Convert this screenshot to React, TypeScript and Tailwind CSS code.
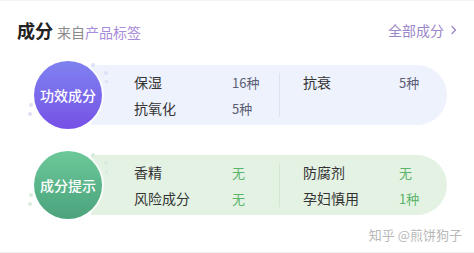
import React from "react";

type Item = { name: string; value: string };

function Section({
  label,
  circleClass,
  pillClass,
  valueClass,
  dotClass,
  dividerClass,
  left,
  right,
}: {
  label: string;
  circleClass: string;
  pillClass: string;
  valueClass: string;
  dotClass: string;
  dividerClass: string;
  left: Item[];
  right: Item[];
}) {
  return (
    <div className="flex items-center h-[68px] pl-[34px] relative">
      <span className={`absolute left-[91px] top-[2px] w-[4px] h-[4px] rounded-full ${dotClass}`} />
      <span className={`absolute left-[104px] top-[10px] w-[4px] h-[4px] rounded-full ${dotClass}`} />
      <span className={`absolute left-[105px] top-[19px] w-[3px] h-[3px] rounded-full ${dotClass}`} />
      <span className={`absolute left-[29px] top-[42px] w-[4px] h-[4px] rounded-full ${dotClass}`} />
      <span className={`absolute left-[28px] top-[51px] w-[4px] h-[4px] rounded-full ${dotClass}`} />
      <div
        className={`relative z-10 w-[68px] h-[68px] shrink-0 rounded-full flex items-center justify-center text-white text-[14px] font-medium ring-2 ring-white/70 ${circleClass}`}
      >
        {label}
      </div>
      <div
        className={`-ml-[11px] h-[60px] w-[356px] rounded-r-[30px] flex items-stretch pl-[43px] ${pillClass}`}
      >
        <div className="flex flex-col justify-center gap-[6px]">
          {left.map((it) => (
            <div key={it.name} className="flex h-[20px] items-center">
              <span className="w-[98px] text-[14px] text-[#333]">{it.name}</span>
              <span className={`w-[47px] text-[13px] ${valueClass}`}>{it.value}</span>
            </div>
          ))}
        </div>
        <div className={`w-px my-[8px] ${dividerClass}`} />
        <div className="flex flex-col justify-center gap-[6px] pl-[23px]">
          {right.map((it) => (
            <div key={it.name} className="flex h-[20px] items-center">
              <span className="w-[96px] text-[14px] text-[#333]">{it.name}</span>
              <span className={`text-[13px] ${valueClass}`}>{it.value}</span>
            </div>
          ))}
          {right.length < 2 && <div className="h-[20px]" />}
        </div>
      </div>
    </div>
  );
}

export default function App() {
  return (
    <div
      className="w-[474px] h-[253px] bg-white overflow-hidden flex flex-col"
      style={{ fontFamily: '"Noto Sans CJK SC", "Noto Sans", sans-serif' }}
    >
      <div className="h-[2px] bg-[#f4f4f4]" />
      <div className="flex items-center justify-between pl-[17px] pr-[15px] mt-[17px] h-[24px]">
        <div className="flex items-baseline">
          <span className="text-[18px] font-bold text-[#222]">成分</span>
          <span className="ml-[4px] text-[14px] text-[#8a8a8a]">来自</span>
          <span className="text-[14px] text-[#a98bd9]">产品标签</span>
        </div>
        <div className="flex items-center text-[14px] text-[#9b86c9]">
          <span>全部成分</span>
          <svg width="10" height="12" viewBox="0 0 10 12" className="ml-[5px]">
            <path d="M3 2.5 L6.5 6 L3 9.5" fill="none" stroke="#9b86c9" strokeWidth="1.3" strokeLinecap="round" strokeLinejoin="round" />
          </svg>
        </div>
      </div>
      <div className="mt-[19px]">
        <Section
          label="功效成分"
          circleClass="bg-gradient-to-b from-[#7f82f0] to-[#7650e6]"
          pillClass="bg-[#eef2fd]"
          valueClass="text-[#5a5d74]"
          dotClass="bg-[#dfe0f6]"
          dividerClass="bg-[#dde2f0]"
          left={[
            { name: "保湿", value: "16种" },
            { name: "抗氧化", value: "5种" },
          ]}
          right={[{ name: "抗衰", value: "5种" }]}
        />
      </div>
      <div className="mt-[22px]">
        <Section
          label="成分提示"
          circleClass="bg-gradient-to-b from-[#6cc899] to-[#4aa37c]"
          pillClass="bg-[#e4f2e4]"
          valueClass="text-[#5cb36a]"
          dotClass="bg-[#d8ebdd]"
          dividerClass="bg-[#d3e6d4]"
          left={[
            { name: "香精", value: "无" },
            { name: "风险成分", value: "无" },
          ]}
          right={[
            { name: "防腐剂", value: "无" },
            { name: "孕妇慎用", value: "1种" },
          ]}
        />
      </div>
      <div className="flex justify-end pr-[12px] mt-[6px] h-[18px] items-center">
        <span className="text-[13px] text-[#b8b8b8]">知乎 @煎饼狗子</span>
      </div>
      <div className="mt-[9px] h-[1px] bg-[#efefef]" />
    </div>
  );
}
